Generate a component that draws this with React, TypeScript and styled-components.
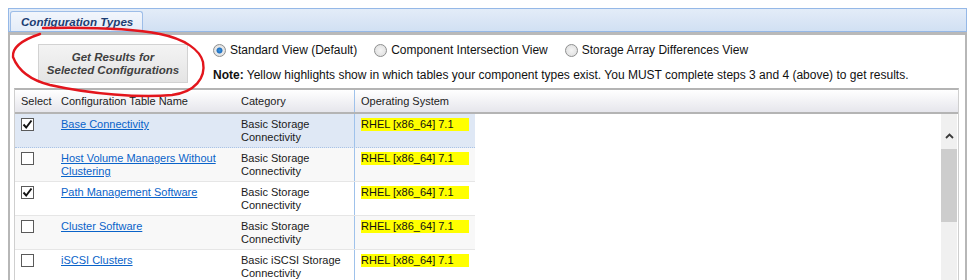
import styled, { createGlobalStyle } from 'styled-components';

const GlobalStyle = createGlobalStyle`
  html, body {
    margin: 0;
    padding: 0;
    background: #ffffff;
    overflow: hidden;
  }
  body {
    font-family: "Liberation Sans", Arial, sans-serif;
    color: #1a1a1a;
  }
`;

type ConfigRow = {
  id: number;
  name: string[];
  category: string[];
  os: string;
  checked: boolean;
};

const rows: ConfigRow[] = [
  { id: 1, name: ['Base Connectivity'], category: ['Basic Storage', 'Connectivity'], os: 'RHEL [x86_64] 7.1', checked: true },
  { id: 2, name: ['Host Volume Managers Without', 'Clustering'], category: ['Basic Storage', 'Connectivity'], os: 'RHEL [x86_64] 7.1', checked: false },
  { id: 3, name: ['Path Management Software'], category: ['Basic Storage', 'Connectivity'], os: 'RHEL [x86_64] 7.1', checked: true },
  { id: 4, name: ['Cluster Software'], category: ['Basic Storage', 'Connectivity'], os: 'RHEL [x86_64] 7.1', checked: false },
  { id: 5, name: ['iSCSI Clusters'], category: ['Basic iSCSI Storage', 'Connectivity'], os: 'RHEL [x86_64] 7.1', checked: false },
];

const viewOptions = [
  { id: 'standard', label: 'Standard View (Default)', selected: true },
  { id: 'intersection', label: 'Component Intersection View', selected: false },
  { id: 'differences', label: 'Storage Array Differences View', selected: false },
];

const App = () => {
  return (
    <Page>
      <GlobalStyle />
      <TabStrip>
        <Tab>Configuration Types</Tab>
      </TabStrip>
      <Panel>
        <TopSection>
          <ResultsButton>
            Get Results for
            <br />
            Selected Configurations
          </ResultsButton>
          <Options>
            <RadioRow>
              {viewOptions.map(option => (
                <RadioOption key={option.id}>
                  <Radio $selected={option.selected} />
                  {option.label}
                </RadioOption>
              ))}
            </RadioRow>
            <Note>
              <b>Note:</b> Yellow highlights show in which tables your component types exist. You MUST complete
              steps 3 and 4 (above) to get results.
            </Note>
          </Options>
        </TopSection>

        <Table>
          <HeaderRow>
            <HeadCell>Select</HeadCell>
            <HeadCell>Configuration Table Name</HeadCell>
            <HeadCell>Category</HeadCell>
            <HeadCell $os>Operating System</HeadCell>
            <HeadCell />
          </HeaderRow>
          <Body>
            <Rows>
              {rows.map((row, index) => (
                <Row key={row.id} $highlight={index === 0} $alt={index % 2 === 1}>
                  <Cell>
                    <Checkbox>
                      {row.checked && (
                        <svg width="11" height="11" viewBox="0 0 11 11">
                          <polyline points="1.5,5.5 4.2,8.5 9.5,1.5" fill="none" stroke="#111" strokeWidth="1.9" />
                        </svg>
                      )}
                    </Checkbox>
                  </Cell>
                  <Cell>
                    <NameLink href="#">
                      {row.name.map((line, i) => (
                        <span key={i}>
                          {i > 0 && <br />}
                          {line}
                        </span>
                      ))}
                    </NameLink>
                  </Cell>
                  <Cell>
                    {row.category[0]}
                    <br />
                    {row.category[1]}
                  </Cell>
                  <Cell $os>
                    <Highlight>{row.os}</Highlight>
                  </Cell>
                </Row>
              ))}
            </Rows>
            <Spacer />
            <Scrollbar>
              <ScrollArrow>
                <svg width="9" height="6" viewBox="0 0 9 6">
                  <polyline points="1,5 4.5,1.5 8,5" fill="none" stroke="#3a3a3a" strokeWidth="1.8" />
                </svg>
              </ScrollArrow>
              <ScrollThumb />
            </Scrollbar>
          </Body>
        </Table>
      </Panel>

      <Annotation width="220" height="110" viewBox="0 0 220 110">
        <path
          d="M43,28 C90,27 130,28 160,34 C185,39 200,50 203,62 C206,78 195,92 172,95 C140,98 90,94 50,85 C30,80 18,70 13,57 C12,48 22,40 40,34"
          fill="none"
          stroke="#e3151c"
          strokeWidth="2.4"
          strokeLinecap="round"
        />
      </Annotation>
    </Page>
  );
};

export default App;

const Page = styled.div`
  position: relative;
  width: 959px;
  padding: 8px 0 0 8px;
`;

const TabStrip = styled.div`
  display: flex;
  align-items: flex-end;
  height: 22px;
  padding-left: 1px;
  border: 1px solid #95b8e7;
  background: linear-gradient(#e3ecf8, #d1e0f3);
`;

const Tab = styled.div`
  height: 19px;
  line-height: 19px;
  padding: 0 9px 0 10px;
  border: 1px solid #9dbde8;
  border-bottom: none;
  border-radius: 3px 3px 0 0;
  background: linear-gradient(#f2f6fc, #e4ecf8);
  color: #1c3d73;
  font-size: 11.6px;
  font-weight: bold;
  font-style: italic;
`;

const Panel = styled.div`
  border-top: 3px solid #b9b9b9;
  border-left: 2px solid #b7b7b7;
  border-right: 2px solid #b7b7b7;
  height: 260px;
`;

const TopSection = styled.div`
  display: flex;
  padding: 9px 0 0 28px;
`;

const ResultsButton = styled.div`
  width: 148px;
  height: 37px;
  display: flex;
  align-items: center;
  justify-content: center;
  text-align: center;
  border: 1px solid #d2d2d2;
  background: linear-gradient(#f3f3f3 0%, #ececec 50%, #e4e4e4 100%);
  color: #404040;
  font-size: 11.5px;
  font-weight: bold;
  font-style: italic;
  line-height: 13px;
`;

const Options = styled.div`
  display: flex;
  flex-direction: column;
  padding: 0 0 0 25px;
  font-size: 12px;
  color: #111;
`;

const RadioRow = styled.div`
  display: flex;
  gap: 17px;
  height: 16px;
  align-items: center;
  margin-top: -2px;
`;

const RadioOption = styled.label`
  display: flex;
  align-items: center;
  gap: 4px;
`;

const Radio = styled.span<{ $selected: boolean }>`
  width: 11px;
  height: 11px;
  border-radius: 50%;
  border: 1px solid #8e8f8f;
  background: ${p =>
    p.$selected
      ? 'radial-gradient(circle, #3d95e0 0, #1f6fbf 2.6px, #e9e9e9 3.4px, #d7d7d7 100%)'
      : 'radial-gradient(circle, #f4f4f4 0, #dcdcdc 100%)'};
`;

const Note = styled.div`
  margin-top: 9px;
  line-height: 16px;
  white-space: nowrap;
`;

const Table = styled.div`
  margin: 5px 0 0 4px;
  width: 943px;
  border-top: 2px solid #b4b4b4;
  border-left: 1px solid #cfcfcf;
  border-right: 1px solid #cfcfcf;
  font-size: 11px;
`;

const HeaderRow = styled.div`
  display: grid;
  grid-template-columns: 40px 180px 119px 121px 1fr;
  height: 22px;
  background: linear-gradient(#ffffff, #e6e6ec);
  border-bottom: 2px solid #b4b4b4;
  color: #222;
`;

const HeadCell = styled.div<{ $os?: boolean }>`
  display: flex;
  align-items: center;
  padding-left: 6px;
  border-left: ${p => (p.$os ? '1px solid #9fc2eb' : 'none')};
`;

const Body = styled.div`
  display: flex;
  height: 180px;
  overflow: hidden;
`;

const Rows = styled.div`
  width: 460px;
  display: flex;
  flex-direction: column;
`;

const Row = styled.div<{ $highlight: boolean; $alt: boolean }>`
  display: grid;
  grid-template-columns: 40px 180px 119px 121px;
  height: 33px;
  flex-shrink: 0;
  background: ${p => (p.$highlight ? '#dfe8f5' : p.$alt ? '#f8f8f8' : '#ffffff')};
  border-bottom: ${p => (p.$highlight ? '1px dotted #a9c3e6' : '1px solid #e6e6e6')};
`;

const Cell = styled.div<{ $os?: boolean }>`
  padding: 4px 0 0 6px;
  line-height: 13px;
  border-left: ${p => (p.$os ? '1px solid #9fc2eb' : 'none')};
`;

const Checkbox = styled.span`
  display: flex;
  align-items: center;
  justify-content: center;
  width: 11px;
  height: 11px;
  border: 1px solid #5a5a5a;
  background: #fff;
`;

const NameLink = styled.a`
  color: #0a63c9;
  text-decoration: underline;
`;

const Highlight = styled.span`
  display: inline-block;
  width: 108px;
  height: 13px;
  background: #ffff00;
  color: #111;
`;

const Spacer = styled.div`
  flex: 1;
`;

const Scrollbar = styled.div`
  width: 16px;
  margin-right: 1px;
  display: flex;
  flex-direction: column;
  background: #f0f0f0;
`;

const ScrollArrow = styled.div`
  height: 35px;
  display: flex;
  align-items: flex-end;
  justify-content: center;
  padding-bottom: 10px;
  box-sizing: border-box;
`;

const ScrollThumb = styled.div`
  height: 73px;
  background: #cdcdcd;
`;

const Annotation = styled.svg`
  position: absolute;
  left: 0;
  top: 0;
  pointer-events: none;
`;
